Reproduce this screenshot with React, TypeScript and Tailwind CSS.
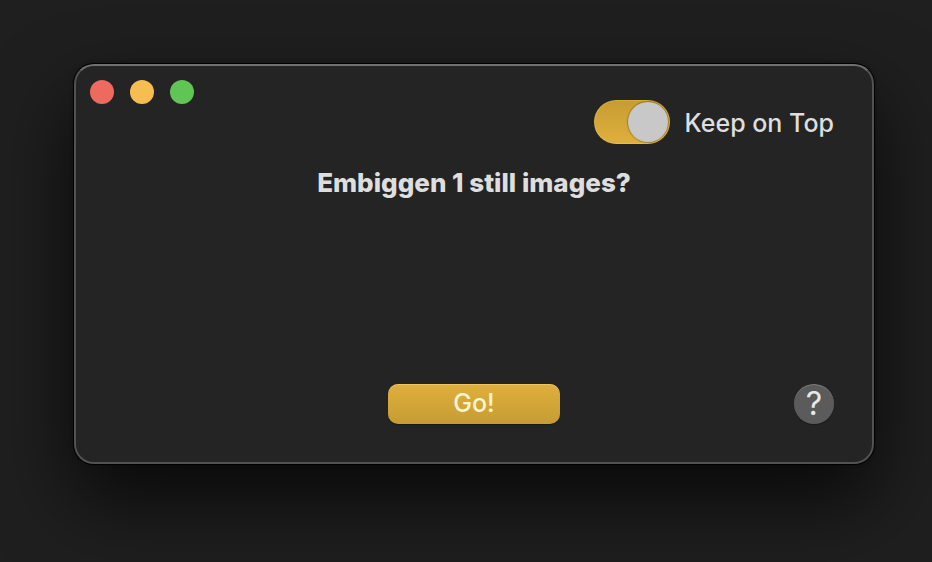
import React, { useState } from "react";

function TrafficLights() {
  return (
    <div className="flex gap-4">
      <button type="button" aria-label="Close" className="size-6 rounded-full bg-[#ed6a5f]" />
      <button type="button" aria-label="Minimize" className="size-6 rounded-full bg-[#f6be50]" />
      <button type="button" aria-label="Zoom" className="size-6 rounded-full bg-[#61c555]" />
    </div>
  );
}

function KeepOnTop() {
  const [on, setOn] = useState(true);
  return (
    <div className="mt-5 flex items-center gap-[15px]">
      <input
        id="keep-on-top"
        type="checkbox"
        role="switch"
        checked={on}
        onChange={(e) => setOn(e.target.checked)}
        className="h-11 w-[76px] shrink-0 appearance-none rounded-full bg-[#555555] p-0.5 shadow-[inset_0_0_0_1px_rgba(255,215,100,0.25)] before:block before:size-10 before:rounded-full before:bg-[#c8c8c8] before:shadow-[0_0_1px_1px_rgba(90,65,10,0.4)] before:content-[''] checked:bg-linear-to-b checked:from-[#c69c33] checked:to-[#e0b03d] checked:before:ml-8"
      />
      <label htmlFor="keep-on-top" className="pt-0.5 text-[25px] leading-8 font-medium whitespace-nowrap">
        Keep on Top
      </label>
    </div>
  );
}

export default function App() {
  return (
    <main className="min-h-screen bg-[#1f1f1f] pt-16 pr-[58px] pb-[98px] pl-[74px] font-['Inter','Liberation_Sans',sans-serif] text-[#dedede]">
      <section className="flex min-h-[400px] flex-col rounded-[20px] border-2 border-[#525252] border-t-[#707070] bg-[#242424] shadow-[0_0_0_1px_#000,0_0_4px_rgba(0,0,0,0.4),0_36px_80px_rgba(0,0,0,0.72)]">
        <header className="flex items-start justify-between pt-3.5 pr-[38px] pl-3.5">
          <TrafficLights />
          <KeepOnTop />
        </header>
        <h1 className="mt-[23px] text-center text-[26px] leading-8 font-extrabold">
          Embiggen 1 still images?
        </h1>
        <footer className="mt-auto grid grid-cols-[1fr_172px_1fr] items-center px-[38px] pb-[38px]">
          <button
            type="button"
            className="col-start-2 h-10 rounded-[10px] bg-linear-to-b from-[#e0b03d] to-[#c69c33] pb-0.5 text-[25px] leading-8 font-medium text-[#fff4d0] shadow-[inset_0_1px_0_rgba(255,235,160,0.4),0_1px_1px_rgba(0,0,0,0.3)]"
          >
            Go!
          </button>
          <button
            type="button"
            aria-label="Help"
            className="flex size-10 items-center justify-center justify-self-end rounded-full bg-[#5b5b5b] text-[32px] leading-8 text-[#e8e8e8] shadow-[inset_0_1px_0_rgba(255,255,255,0.2),0_1px_1px_rgba(0,0,0,0.3)]"
          >
            ?
          </button>
        </footer>
      </section>
    </main>
  );
}
